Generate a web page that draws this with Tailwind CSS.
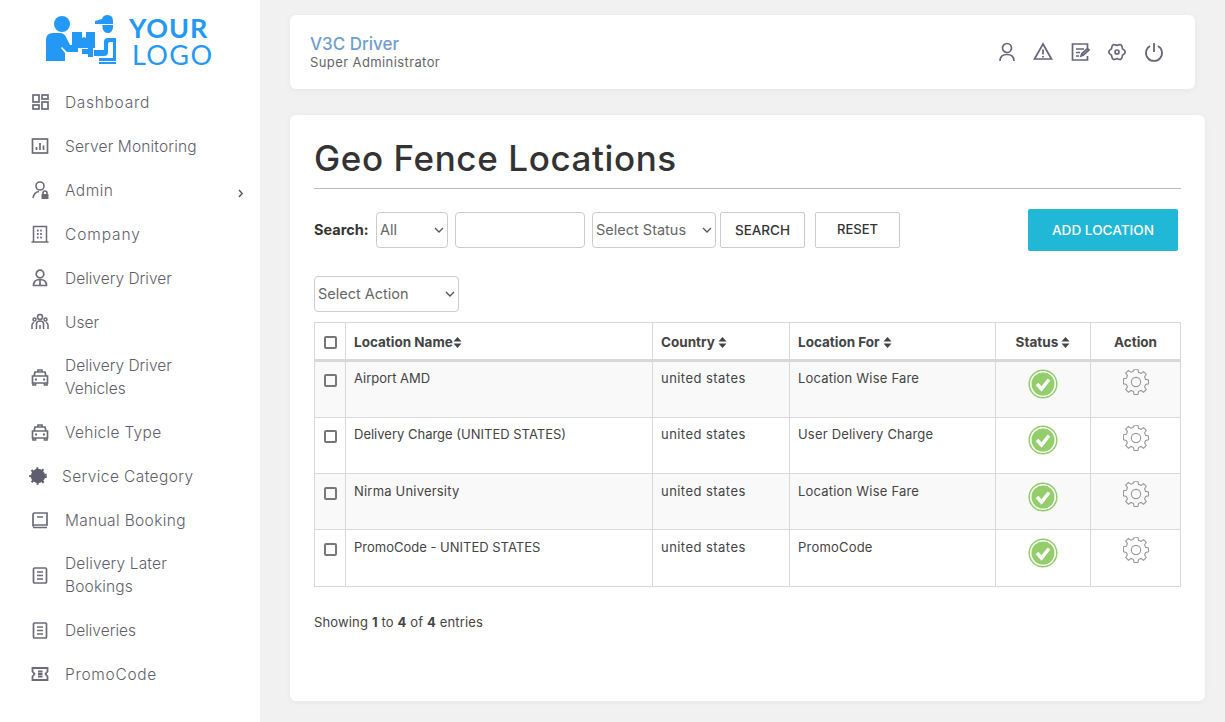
<!DOCTYPE html>
<html><head><meta charset="utf-8"><script src="https://cdn.jsdelivr.net/npm/@tailwindcss/browser@4"></script></head>
<body class="m-0 bg-[#f1f1f1] font-['Inter','Liberation_Sans',sans-serif] text-[#333]">
<div class="flex h-[722px] w-[1225px] overflow-hidden">
<aside class="w-[260px] shrink-0 bg-white text-[15.5px] font-light text-[#5f5f6c] tracking-[0.15px]">
  <div class="h-[80px] flex pl-[45px] pt-[14px] gap-[12px]">
    <svg width="72" height="52" viewBox="0 0 72 52" fill="#2399f5">
      <circle cx="17" cy="10" r="8"/>
      <path d="M1 47V26q0-7 7-7h7q4 0 6 4l4 8h8v7H22l-5-5-1 1 4 5v8z"/>
      <path fill-rule="evenodd" d="M27 18h23v16H27zM37 18v6l2-1 2 1v-6z"/>
      <path d="M37 35h6v-1h5v9h-5v-3h-6z"/>
      <path d="M50 7l7-2q1-4 5.500-4Q68 1 68 7v3H50z"/>
      <path d="M57.500 11H68v3q-1 5-5 5-4.500 0-5.500-5z"/>
      <path fill-rule="evenodd" d="M49 36h10v-8q0-4 4-4h8v23H54v-3h14V28h-3q-2 0-2 2v8q0 4-4 4H49zM54 48h17v2H54z"/>
    </svg>
    <div class="text-[#2399f5] font-['Lato','Inter',sans-serif]">
      <div class="text-[27px] font-bold leading-[27px] tracking-[0.9px]">YOUR</div>
      <div class="text-[27px] font-normal leading-[27px] ml-[3px] tracking-[1.4px]">LOGO</div>
    </div>
  </div>
  <nav class="flex flex-col">
    <a class="flex items-center py-[10.5px] pl-[30px] leading-[23px] tracking-[0.7px]"><span class="w-[35px] shrink-0"><svg width="20" height="20" viewBox="0 0 20 20" fill="none" stroke="#6c6c78" stroke-width="1.7"><rect x="3" y="3" width="6" height="7"/><rect x="12" y="3" width="6" height="4"/><rect x="3" y="13" width="6" height="4"/><rect x="12" y="10" width="6" height="7"/></svg></span>Dashboard</a>
    <a class="flex items-center py-[10.5px] pl-[30px] leading-[23px]"><span class="w-[35px] shrink-0"><svg width="20" height="20" viewBox="0 0 20 20" fill="none" stroke="#6c6c78" stroke-width="1.7"><rect x="2.500" y="3" width="15" height="14"/><path d="M6.500 14v-3M10 14V7M13.500 14v-4.500"/></svg></span>Server Monitoring</a>
    <a class="flex items-center py-[10.5px] pl-[30px] leading-[23px] relative tracking-[0.5px]"><span class="w-[35px] shrink-0"><svg width="20" height="20" viewBox="0 0 20 20" fill="none" stroke="#6c6c78" stroke-width="1.6"><circle cx="10" cy="6" r="4"/><path d="M3 18q1-6 6-6.500"/><path fill="#6c6c78" stroke="none" d="M11.500 14h7v5h-7z"/><path d="M13 14v-1a2 2 0 0 1 4 0v1"/></svg></span>Admin<svg class="absolute left-[236px] top-[21px]" width="9" height="9" viewBox="0 0 9 9" fill="none" stroke="#555" stroke-width="1.400"><path d="M3 1l3.200 3.500L3 8"/></svg></a>
    <a class="flex items-center py-[10.5px] pl-[30px] leading-[23px] tracking-[0.9px]"><span class="w-[35px] shrink-0"><svg width="20" height="20" viewBox="0 0 20 20" fill="none" stroke="#6c6c78" stroke-width="1.500"><path d="M3.500 18V2.500h13V18M1.500 18h17"/><path stroke-width="1.800" stroke-dasharray="1.600 1.600" d="M7 6.500h6M7 10h6M7 13.500h6"/></svg></span>Company</a>
    <a class="flex items-center py-[10.5px] pl-[30px] leading-[23px] tracking-normal"><span class="w-[35px] shrink-0"><svg width="20" height="20" viewBox="0 0 20 20" fill="none" stroke="#6c6c78" stroke-width="1.700"><circle cx="10" cy="6" r="3.800"/><path d="M3.500 17.500q0-6 6.500-6t6.500 6zM10 11.500v6"/></svg></span>Delivery Driver</a>
    <a class="flex items-center py-[10.5px] pl-[30px] leading-[23px] tracking-normal"><span class="w-[35px] shrink-0"><svg width="20" height="20" viewBox="0 0 20 20" fill="none" stroke="#6c6c78" stroke-width="1.500"><circle cx="10" cy="5" r="2.500"/><circle cx="4.500" cy="7.500" r="1.500"/><circle cx="15.500" cy="7.500" r="1.500"/><path d="M6.500 17v-5q0-3 3.500-3t3.500 3v5M10 13v4M2 17v-4q0-2 2-2.500M18 17v-4q0-2-2-2.500"/></svg></span>User</a>
    <a class="flex items-center py-[10px] pl-[30px] leading-[23px] tracking-normal"><span class="w-[35px] shrink-0"><svg width="20" height="20" viewBox="0 0 20 20" fill="none" stroke="#6c6c78" stroke-width="1.700"><path d="M4 9l1-4h10l1 4M2.500 9h15v7h-15zM8 4.500V3h4v1.500M3 16v2h2.500v-2M14.500 16v2H17v-2"/><path stroke-width="2" d="M5 12.500h2M13 12.500h2"/></svg></span><span class="w-[140px]">Delivery Driver Vehicles</span></a>
    <a class="flex items-center py-[10.5px] pl-[30px] leading-[23px] tracking-[0.3px]"><span class="w-[35px] shrink-0"><svg width="20" height="20" viewBox="0 0 20 20" fill="none" stroke="#6c6c78" stroke-width="1.700"><path d="M4 9l1-4h10l1 4M2.500 9h15v7h-15zM8 4.500V3h4v1.500M3 16v2h2.500v-2M14.500 16v2H17v-2"/><path stroke-width="2" d="M5 12.500h2M13 12.500h2"/></svg></span>Vehicle Type</a>
    <a class="flex items-center py-[10.5px] pl-[30px] leading-[23px] tracking-[0.4px]"><span class="w-[32px] shrink-0"><svg width="18" height="18" viewBox="0 0 18 18" fill="#5e5e6e" class="-ml-[1px]"><circle cx="9" cy="9" r="7.200"/><g stroke="#5e5e6e" stroke-width="2.400" stroke-dasharray="2 3.650"><circle cx="9" cy="9" r="7.600" fill="none"/></g></svg></span>Service Category</a>
    <a class="flex items-center py-[10.5px] pl-[30px] leading-[23px] tracking-[0.35px]"><span class="w-[35px] shrink-0"><svg width="20" height="20" viewBox="0 0 20 20" fill="none" stroke="#6c6c78" stroke-width="1.700"><path d="M17 15H5q-2 0-2 1.500V4.500q0-1.500 1.500-1.500H17zM3 17.500h14M7 7h6"/></svg></span>Manual Booking</a>
    <a class="flex items-center py-[10px] pl-[30px] leading-[23px]"><span class="w-[35px] shrink-0"><svg width="20" height="20" viewBox="0 0 20 20" fill="none" stroke="#6c6c78" stroke-width="1.700"><rect x="3.500" y="3" width="13" height="15" rx="1"/><path d="M7 7h6M7 10.500h6M7 14h6"/></svg></span><span class="w-[130px]">Delivery Later Bookings</span></a>
    <a class="flex items-center py-[10.5px] pl-[30px] leading-[23px] tracking-normal"><span class="w-[35px] shrink-0"><svg width="20" height="20" viewBox="0 0 20 20" fill="none" stroke="#6c6c78" stroke-width="1.700"><rect x="3.500" y="3" width="13" height="15" rx="1"/><path d="M7 7h6M7 10.500h6M7 14h6"/></svg></span>Deliveries</a>
    <a class="flex items-center py-[10.5px] pl-[30px] leading-[23px] tracking-[0.7px]"><span class="w-[35px] shrink-0"><svg width="20" height="20" viewBox="0 0 20 20" fill="none" stroke="#6c6c78" stroke-width="1.800"><path d="M2.500 4h15v3.500l-2 2.500 2 2.500V16h-15v-3.500l2-2.500-2-2.500zM8 7.500h4.500M8 10h4.500M8 12.500h4.500"/></svg></span>PromoCode</a>
  </nav>
</aside>
<main class="flex-1 pt-[15px] pl-[30px] pr-[20px]">
  <header class="w-[905px] h-[74px] bg-white rounded-md shadow-[0_1px_6px_rgba(0,0,0,0.05)] flex items-center pl-[20px] pr-[30px] justify-between">
    <div class="pt-[1px]">
      <div class="text-[17px] leading-[19px] font-medium text-[#6f9dcf]">V3C Driver</div>
      <div class="text-[13px] leading-[17px] text-[#666] tracking-[0.4px]">Super Administrator</div>
    </div>
    <div class="flex gap-[15px] text-[#66667a]">
      <svg class="relative left-[1px]" width="22" height="22" viewBox="0 0 22 22" fill="none" stroke="currentColor" stroke-width="1.700"><circle cx="11" cy="7" r="4.500"/><path d="M4 20q0-6.500 7-6.500T18 20"/></svg>
      <svg width="22" height="22" viewBox="0 0 22 22" fill="none" stroke="currentColor" stroke-width="1.700"><path d="M11 3l8.500 15h-17zM11 8.500v5M11 15v1.500"/></svg>
      <svg width="22" height="22" viewBox="0 0 22 22" fill="none" stroke="currentColor" stroke-width="1.700"><path d="M18.500 9V3h-15v16h15v-4M7 8h8M7 11.500h4M7 15h3M12 15l1-2.500 5.500-5 1.500 1.500-5.500 5z"/></svg>
      <svg width="22" height="22" viewBox="0 0 22 22" fill="none" stroke="currentColor" stroke-width="1.700" stroke-linejoin="round"><path d="M11 4.500Q16 1.500 16.500 7.800Q22 11 16.500 14.200Q16 20.500 11 17.500Q6 20.500 5.500 14.200Q0 11 5.500 7.800Q6 1.500 11 4.500z"/><circle cx="11" cy="11" r="2"/></svg>
      <svg width="22" height="22" viewBox="0 0 22 22" fill="none" stroke="currentColor" stroke-width="1.800"><path d="M7 5a8 8 0 1 0 8 0M11 2v9"/></svg>
    </div>
  </header>
  <section class="mt-[26px] w-[915px] h-[586px] bg-white rounded-md shadow-[0_1px_6px_rgba(0,0,0,0.05)] px-[24px] pt-[20px]">
    <h1 class="text-[35px] leading-[47px] font-medium tracking-[0.6px] text-[#333] pb-[6px] border-b border-[#bbb] w-[867px]">Geo Fence Locations</h1>
    <div class="flex items-center mt-[20px] h-[42px] text-[14.500px]">
      <b class="font-bold w-[62px] text-[14.500px]">Search:</b>
      <div class="relative"><select class="appearance-none block w-[72px] h-[36px] border border-[#ccc] rounded-[4px] text-[#666] pl-[3px]"><option>All</option></select><svg class="absolute right-[4px] top-[15px]" width="10" height="7" viewBox="0 0 10 7" fill="none" stroke="#555" stroke-width="1.300"><path d="M1 1l4 4 4-4"/></svg></div>
      <input class="ml-[7px] w-[130px] h-[36px] border border-[#ccc] rounded-[4px]">
      <div class="relative ml-[7px]"><select class="appearance-none block w-[124px] h-[36px] border border-[#ccc] rounded-[4px] text-[#666] pl-[3px]"><option>Select Status</option></select><svg class="absolute right-[4px] top-[15px]" width="10" height="7" viewBox="0 0 10 7" fill="none" stroke="#555" stroke-width="1.300"><path d="M1 1l4 4 4-4"/></svg></div>
      <button class="ml-[4px] w-[85px] h-[36px] border border-[#ccc] rounded-[2px] text-[13.500px] font-medium text-[#333]">SEARCH</button>
      <button class="ml-[10px] w-[85px] h-[36px] border border-[#ccc] rounded-[2px] text-[13px] font-medium text-[#333]">RESET</button>
      <button class="ml-[128px] w-[150px] h-[42px] bg-[#21b8d8] rounded-[2px] text-white text-[13.600px] font-medium">ADD LOCATION</button>
    </div>
    <div class="mt-[25px] relative w-[145px]"><select class="appearance-none block w-[145px] h-[36px] border border-[#ccc] rounded-[4px] text-[#666] text-[14.500px] pl-[3px]"><option>Select Action</option></select><svg class="absolute right-[4px] top-[15px]" width="10" height="7" viewBox="0 0 10 7" fill="none" stroke="#555" stroke-width="1.300"><path d="M1 1l4 4 4-4"/></svg></div>
    <table class="mt-[10px] w-[866px] table-fixed border-collapse text-[13px] text-[#444]">
      <colgroup><col class="w-[31px]"><col class="w-[307px]"><col class="w-[137px]"><col class="w-[206px]"><col class="w-[95px]"><col class="w-[90px]"></colgroup>
      <thead class="font-bold text-[#444] text-[13.500px]">
        <tr class="h-[38px]">
          <th class="border border-[#d8d8d8] border-b-[3px] text-center"><span class="inline-block align-middle size-[13px] border-2 border-[#777] rounded-[2px]"></span></th>
          <th class="border border-[#d8d8d8] border-b-[3px] px-[8px] pt-[2px] text-left">Location Name<svg class="inline-block align-[-1px]" width="9" height="11" viewBox="0 0 9 11" fill="#444"><path d="M4.500 0l4 4.500H.5zM4.500 11l4-4.500H.5z"/></svg></th>
          <th class="border border-[#d8d8d8] border-b-[3px] px-[8px] pt-[2px] text-left">Country <svg class="inline-block align-[-1px]" width="9" height="11" viewBox="0 0 9 11" fill="#444"><path d="M4.500 0l4 4.500H.5zM4.500 11l4-4.500H.5z"/></svg></th>
          <th class="border border-[#d8d8d8] border-b-[3px] px-[8px] pt-[2px] text-left">Location For <svg class="inline-block align-[-1px]" width="9" height="11" viewBox="0 0 9 11" fill="#444"><path d="M4.500 0l4 4.500H.5zM4.500 11l4-4.500H.5z"/></svg></th>
          <th class="border border-[#d8d8d8] border-b-[3px] px-[8px] pt-[2px] text-center">Status <svg class="inline-block align-[-1px]" width="9" height="11" viewBox="0 0 9 11" fill="#444"><path d="M4.500 0l4 4.500H.5zM4.500 11l4-4.500H.5z"/></svg></th>
          <th class="border border-[#d8d8d8] border-b-[3px] px-[8px] pt-[2px] text-center">Action</th>
        </tr>
      </thead>
      <tbody class="align-top">
        <tr class="h-[57px] bg-[#f9f9f9]">
          <td class="border border-[#d8d8d8] text-center pt-[11px]"><span class="inline-block size-[13px] border-2 border-[#777] rounded-[2px]"></span></td>
          <td class="border border-[#d8d8d8] px-[8px] pt-[7px]">Airport AMD</td><td class="border border-[#d8d8d8] px-[8px] pt-[7px] tracking-[0.45px]">united states</td><td class="border border-[#d8d8d8] px-[8px] pt-[7px] tracking-[0.2px]">Location Wise Fare</td>
          <td class="border border-[#d8d8d8] pt-[7px]"><svg class="mx-auto" width="30" height="30" viewBox="0 0 30 30"><circle cx="15" cy="15" r="13.800" fill="#fff" stroke="#94cd6c" stroke-width="1.500"/><circle cx="15" cy="15" r="11.500" fill="#94cd6c"/><path d="M9 15l4.500 5L21 10.500" fill="none" stroke="#fff" stroke-width="3.500"/></svg></td>
          <td class="border border-[#d8d8d8] pt-[7px]"><svg class="mx-auto" width="26" height="26" viewBox="0 0 24 24" fill="none" stroke="#999" stroke-width="1"><circle cx="12" cy="12" r="4.300"/><path d="M10.200 1.500h3.600l.5 2.700 2.400 1 2.300-1.600 2.500 2.500-1.600 2.300 1 2.400 2.700.5v3.600l-2.700.5-1 2.400 1.600 2.300-2.500 2.500-2.300-1.600-2.400 1-.5 2.700h-3.600l-.5-2.700-2.400-1-2.300 1.600-2.500-2.500 1.600-2.300-1-2.400-2.700-.5V10.200l2.700-.5 1-2.400-1.600-2.300 2.500-2.500 2.300 1.600 2.400-1z" transform="translate(12 12) scale(1) translate(-12 -13.200)"/></svg></td>
        </tr>
        <tr class="h-[56px] bg-white">
          <td class="border border-[#d8d8d8] text-center pt-[11px]"><span class="inline-block size-[13px] border-2 border-[#777] rounded-[2px]"></span></td>
          <td class="border border-[#d8d8d8] px-[8px] pt-[7px]">Delivery Charge (UNITED STATES)</td><td class="border border-[#d8d8d8] px-[8px] pt-[7px] tracking-[0.45px]">united states</td><td class="border border-[#d8d8d8] px-[8px] pt-[7px] tracking-[0.2px]">User Delivery Charge</td>
          <td class="border border-[#d8d8d8] pt-[7px]"><svg class="mx-auto" width="30" height="30" viewBox="0 0 30 30"><circle cx="15" cy="15" r="13.800" fill="#fff" stroke="#94cd6c" stroke-width="1.500"/><circle cx="15" cy="15" r="11.500" fill="#94cd6c"/><path d="M9 15l4.500 5L21 10.500" fill="none" stroke="#fff" stroke-width="3.500"/></svg></td>
          <td class="border border-[#d8d8d8] pt-[7px]"><svg class="mx-auto" width="26" height="26" viewBox="0 0 24 24" fill="none" stroke="#999" stroke-width="1"><circle cx="12" cy="12" r="4.300"/><path d="M10.200 1.500h3.600l.5 2.700 2.400 1 2.300-1.600 2.500 2.500-1.600 2.300 1 2.400 2.700.5v3.600l-2.700.5-1 2.400 1.600 2.300-2.500 2.500-2.300-1.600-2.400 1-.5 2.700h-3.600l-.5-2.700-2.400-1-2.300 1.600-2.500-2.500 1.600-2.300-1-2.400-2.700-.5V10.200l2.700-.5 1-2.400-1.600-2.300 2.500-2.500 2.300 1.600 2.400-1z" transform="translate(12 12) scale(1) translate(-12 -13.200)"/></svg></td>
        </tr>
        <tr class="h-[56px] bg-[#f9f9f9]">
          <td class="border border-[#d8d8d8] text-center pt-[12px]"><span class="inline-block size-[13px] border-2 border-[#777] rounded-[2px]"></span></td>
          <td class="border border-[#d8d8d8] px-[8px] pt-[8px] tracking-[0.2px]">Nirma University</td><td class="border border-[#d8d8d8] px-[8px] pt-[8px] tracking-[0.45px]">united states</td><td class="border border-[#d8d8d8] px-[8px] pt-[8px] tracking-[0.2px]">Location Wise Fare</td>
          <td class="border border-[#d8d8d8] pt-[8px]"><svg class="mx-auto" width="30" height="30" viewBox="0 0 30 30"><circle cx="15" cy="15" r="13.800" fill="#fff" stroke="#94cd6c" stroke-width="1.500"/><circle cx="15" cy="15" r="11.500" fill="#94cd6c"/><path d="M9 15l4.500 5L21 10.500" fill="none" stroke="#fff" stroke-width="3.500"/></svg></td>
          <td class="border border-[#d8d8d8] pt-[7px]"><svg class="mx-auto" width="26" height="26" viewBox="0 0 24 24" fill="none" stroke="#999" stroke-width="1"><circle cx="12" cy="12" r="4.300"/><path d="M10.200 1.500h3.600l.5 2.700 2.400 1 2.300-1.600 2.500 2.500-1.600 2.300 1 2.400 2.700.5v3.600l-2.700.5-1 2.400 1.600 2.300-2.500 2.500-2.300-1.600-2.400 1-.5 2.700h-3.600l-.5-2.700-2.400-1-2.300 1.600-2.500-2.500 1.600-2.300-1-2.400-2.700-.5V10.200l2.700-.5 1-2.400-1.600-2.300 2.500-2.500 2.300 1.600 2.400-1z" transform="translate(12 12) scale(1) translate(-12 -13.200)"/></svg></td>
        </tr>
        <tr class="h-[57px] bg-white">
          <td class="border border-[#d8d8d8] text-center pt-[12px]"><span class="inline-block size-[13px] border-2 border-[#777] rounded-[2px]"></span></td>
          <td class="border border-[#d8d8d8] px-[8px] pt-[8px]">PromoCode - UNITED STATES</td><td class="border border-[#d8d8d8] px-[8px] pt-[8px] tracking-[0.45px]">united states</td><td class="border border-[#d8d8d8] px-[8px] pt-[8px] tracking-[0.2px]">PromoCode</td>
          <td class="border border-[#d8d8d8] pt-[8px]"><svg class="mx-auto" width="30" height="30" viewBox="0 0 30 30"><circle cx="15" cy="15" r="13.800" fill="#fff" stroke="#94cd6c" stroke-width="1.500"/><circle cx="15" cy="15" r="11.500" fill="#94cd6c"/><path d="M9 15l4.500 5L21 10.500" fill="none" stroke="#fff" stroke-width="3.500"/></svg></td>
          <td class="border border-[#d8d8d8] pt-[7px]"><svg class="mx-auto" width="26" height="26" viewBox="0 0 24 24" fill="none" stroke="#999" stroke-width="1"><circle cx="12" cy="12" r="4.300"/><path d="M10.200 1.500h3.600l.5 2.700 2.400 1 2.300-1.600 2.500 2.500-1.600 2.300 1 2.400 2.700.5v3.600l-2.700.5-1 2.400 1.600 2.300-2.500 2.500-2.300-1.600-2.400 1-.5 2.700h-3.600l-.5-2.700-2.400-1-2.300 1.600-2.500-2.500 1.600-2.300-1-2.400-2.700-.5V10.200l2.700-.5 1-2.400-1.600-2.300 2.500-2.500 2.300 1.600 2.400-1z" transform="translate(12 12) scale(1) translate(-12 -13.200)"/></svg></td>
        </tr>
      </tbody>
    </table>
    <p class="mt-[26px] text-[13px] leading-[18px] text-[#444] tracking-[0.15px]">Showing <b>1</b> to <b>4</b> of <b>4</b> entries</p>
  </section>
</main>
</div>
</body></html>
